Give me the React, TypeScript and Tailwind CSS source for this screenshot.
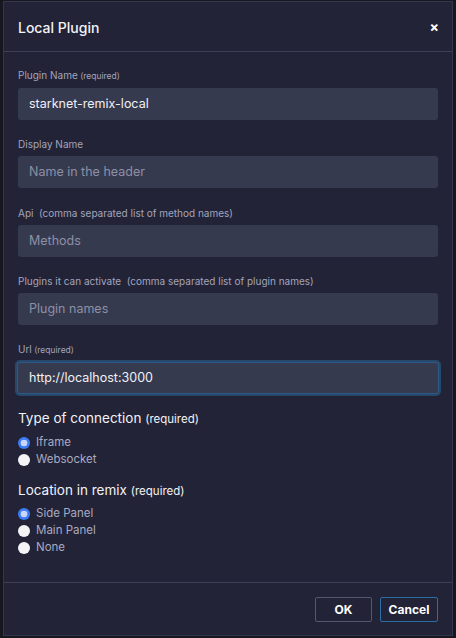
import React from "react";

const font = { fontFamily: "Inter, 'Liberation Sans', sans-serif" };

function Label({ main, hint, req }: { main: string; hint?: string; req?: boolean }) {
  return (
    <div className="text-[10px] leading-[14px] text-[#a2a3bd] mb-[5px] whitespace-pre">
      {main}
      {req && <span className="text-[8.5px]"> (required)</span>}
      {hint && <span>{"  " + hint}</span>}
    </div>
  );
}

function Field({ value, placeholder, focus }: { value?: string; placeholder?: string; focus?: boolean }) {
  return (
    <div
      className={
        "h-[32px] rounded-[3px] bg-[#363a4f] flex items-center pl-[11px] text-[12.5px] " +
        (focus ? "ring-2 ring-[#27476b] border border-[#2b5a86] -mx-[1px] pl-[10px]" : "")
      }
    >
      {value ? <span className="text-[#f0f0f5]">{value}</span> : <span className="text-[#8d90a6]">{placeholder}</span>}
    </div>
  );
}

function Radio({ label, checked }: { label: string; checked?: boolean }) {
  return (
    <div className="flex items-center h-[17px]">
      <svg width="12" height="12" viewBox="0 0 12 12" className="mr-[6px]">
        {checked ? (
          <>
            <circle cx="6" cy="6" r="6" fill="#3d7cf7" />
            <circle cx="6" cy="6" r="3.3" fill="#c9d7fb" />
          </>
        ) : (
          <circle cx="6" cy="6" r="6" fill="#f4f4f7" />
        )}
      </svg>
      <span className="text-[11.5px] text-[#a8aac2]">{label}</span>
    </div>
  );
}

export default function App() {
  return (
    <div className="w-[456px] h-[638px] bg-[#16171f] overflow-hidden relative" style={font}>
      <div className="absolute left-[3px] top-[1px] w-[450px] h-[635px] bg-[#222336] border border-[#34364b] flex flex-col">
        <div className="h-[50px] flex items-center justify-between pl-[14px] pr-[13px] border-b border-[#3d3f55] shrink-0">
          <span className="text-[14px] text-[#f2f2f6] font-medium mt-[2px]">Local Plugin</span>
          <span className="text-[14px] text-white font-bold mb-[1px]">×</span>
        </div>
        <div className="flex-1 px-[14px] pt-[16px]">
          <Label main="Plugin Name" req />
          <Field value="starknet-remix-local" />
          <div className="h-[17px]" />
          <Label main="Display Name" />
          <Field placeholder="Name in the header" />
          <div className="h-[18px]" />
          <Label main="Api" hint="(comma separated list of method names)" />
          <Field placeholder="Methods" />
          <div className="h-[17px]" />
          <Label main="Plugins it can activate" hint="(comma separated list of plugin names)" />
          <Field placeholder="Plugin names" />
          <div className="h-[17px]" />
          <Label main="Url" req />
          <Field value="http://localhost:3000" focus />
          <div className="mt-[14px] text-[13.5px] leading-[20px] text-[#f2f2f6] mb-[5px]">
            Type of connection <span className="text-[11.5px]">(required)</span>
          </div>
          <Radio label="Iframe" checked />
          <Radio label="Websocket" />
          <div className="mt-[12px] text-[13.5px] leading-[20px] text-[#f2f2f6] mb-[4px]">
            Location in remix <span className="text-[11.5px]">(required)</span>
          </div>
          <Radio label="Side Panel" checked />
          <Radio label="Main Panel" />
          <Radio label="None" />
        </div>
        <div className="h-[53px] border-t border-[#3d3f55] flex items-start justify-end gap-[8px] pr-[14px] pt-[14px] shrink-0">
          <button className="w-[57px] h-[25px] border border-[#55576e] rounded-[2px] text-[12px] font-bold text-white">OK</button>
          <button className="w-[58px] h-[25px] border border-[#2a6ea8] rounded-[2px] text-[12px] font-bold text-white">Cancel</button>
        </div>
      </div>
    </div>
  );
}
